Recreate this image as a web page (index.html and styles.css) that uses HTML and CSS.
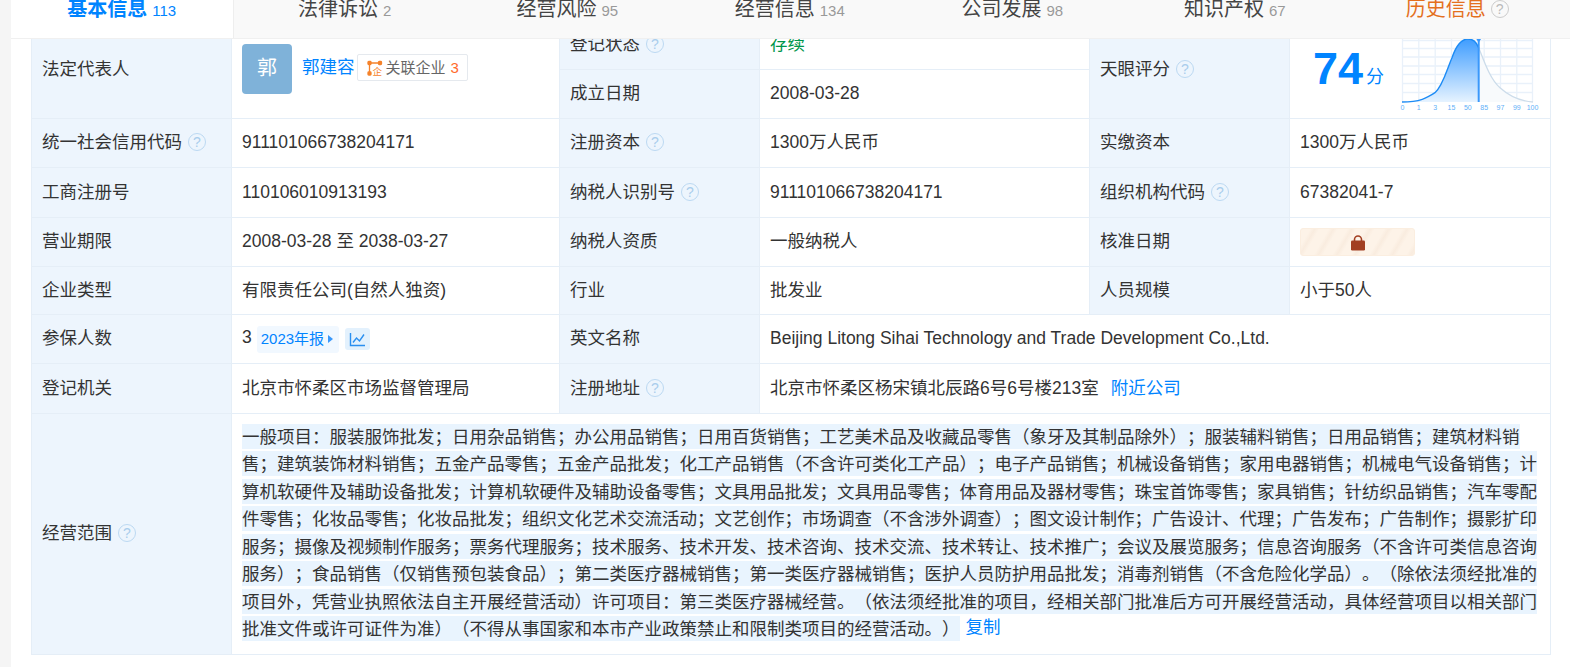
FILE: index.html
```html
<!DOCTYPE html>
<html lang="zh-CN">
<head>
<meta charset="utf-8">
<title>工商信息</title>
<link rel="stylesheet" href="styles.css">
</head>
<body>
<div class="page">
  <main class="card">
    <nav class="tabs">
      <a class="tab tab-active">基本信息<span class="count">113</span></a>
      <a class="tab">法律诉讼<span class="count">2</span></a>
      <a class="tab">经营风险<span class="count">95</span></a>
      <a class="tab">经营信息<span class="count">134</span></a>
      <a class="tab">公司发展<span class="count">98</span></a>
      <a class="tab">知识产权<span class="count">67</span></a>
      <a class="tab tab-history">历史信息<span class="q q-gray">?</span></a>
    </nav>
    <table class="info">
      <colgroup>
        <col class="c-label"><col class="c-val1"><col class="c-label"><col class="c-val2"><col class="c-label"><col class="c-val3">
      </colgroup>
      <tbody>
        <tr>
          <th rowspan="2">法定代表人</th>
          <td rowspan="2">
            <div class="person">
              <span class="avatar">郭</span>
              <div class="person-line">
                <a class="link">郭建容</a>
                <span class="rel-tag">
                  <svg class="rel-icon" width="16" height="16" viewBox="0 0 16 16" fill="none" stroke="#f5822a" stroke-width="1.3">
                    <rect x="1" y="1.5" width="3" height="3" rx=".8" fill="#f5822a"/>
                    <rect x="11.5" y="1.5" width="3" height="3" rx=".8" fill="#f5822a"/>
                    <rect x="1" y="12" width="3" height="3" rx=".8" fill="#f5822a"/>
                    <path d="M4 3h7.500M2.500 4.500v7.500"/>
                    <text x="5.500" y="15" font-size="9.500" fill="#f5822a" stroke="none" class="rel-qi">企</text>
                  </svg>关联企业<span class="rel-num">3</span>
                </span>
              </div>
            </div>
          </td>
          <th>登记状态<span class="q">?</span></th>
          <td class="green">存续</td>
          <th rowspan="2">天眼评分<span class="q">?</span></th>
          <td rowspan="2" class="score-cell">
            <div class="score">
              <span class="score-num">74</span><span class="score-unit">分</span>
              <svg class="score-chart" width="145" height="97" viewBox="0 0 145 97">
                <defs>
                  <linearGradient id="fillBlue" x1="0" y1="0" x2="0" y2="1">
                    <stop offset="0" stop-color="#3f9dff"/>
                    <stop offset="1" stop-color="#e6f3ff"/>
                  </linearGradient>
                </defs>
                <g stroke="#e9f1fa" stroke-width="1.300" fill="none">
                  <path d="M7 19.500H138M7 27.500H138M7 36H138M7 45H138M7 53.500H138M7 62.500H138M7 71.500H138"/>
                  <path d="M7.500 18V81M23.800 18V81M40.200 18V81M56.500 18V81M72.800 18V81M89.200 18V81M105.500 18V81M121.800 18V81M137.500 18V81"/>
                </g>
                <path d="M83.700 26.700C89 40 95 58 105 66.700C113 74 125 80 138 81V81H83.700Z" fill="#f8fafc"/>
                <path d="M83.700 26.700C89 40 95 58 105 66.700C113 74 125 80 138 81" fill="none" stroke="#ccdcea" stroke-width="1.300"/>
                <path d="M7 81C25 81 32 77 40 71.700C48 65 52 48 57 36.700C60 28 65 18 73 18C78 18 81.500 21 83.700 26.700V81Z" fill="url(#fillBlue)"/>
                <path d="M7 81C25 81 32 77 40 71.700C48 65 52 48 57 36.700C60 28 65 18 73 18C78 18 81.500 21 83.700 26.700" fill="none" stroke="#1c8bf5" stroke-width="1.400"/>
                <path d="M83.700 18V81" stroke="#3a98fb" stroke-width="2"/>
                <path d="M81 17.500h5.400l-2.700 4z" fill="#3a98fb"/>
                <g class="chart-labels" font-size="7" fill="#5fb0f8" text-anchor="middle">
                  <text x="7.500" y="89">0</text><text x="23.800" y="89">1</text><text x="40.200" y="89">3</text>
                  <text x="56.500" y="89">15</text><text x="72.800" y="89">50</text><text x="89.200" y="89">85</text>
                  <text x="105.500" y="89">97</text><text x="121.800" y="89">99</text><text x="137.500" y="89">100</text>
                </g>
              </svg>
            </div>
          </td>
        </tr>
        <tr>
          <th>成立日期</th>
          <td>2008-03-28</td>
        </tr>
        <tr>
          <th>统一社会信用代码<span class="q">?</span></th>
          <td>911101066738204171</td>
          <th>注册资本<span class="q">?</span></th>
          <td>1300万人民币</td>
          <th>实缴资本</th>
          <td>1300万人民币</td>
        </tr>
        <tr class="row-tall">
          <th>工商注册号</th>
          <td>110106010913193</td>
          <th>纳税人识别号<span class="q">?</span></th>
          <td>911101066738204171</td>
          <th>组织机构代码<span class="q">?</span></th>
          <td>67382041-7</td>
        </tr>
        <tr>
          <th>营业期限</th>
          <td>2008-03-28 至 2038-03-27</td>
          <th>纳税人资质</th>
          <td>一般纳税人</td>
          <th>核准日期</th>
          <td>
            <span class="locked">
              <svg width="16" height="17" viewBox="0 0 16 17"><path d="M4.500 7V5.500a3.500 3.500 0 0 1 7 0V7" fill="none" stroke="#a23f22" stroke-width="1.600"/><rect x="1" y="6.500" width="14" height="10" rx="1.200" fill="#a23f22"/></svg>
            </span>
          </td>
        </tr>
        <tr class="row-short">
          <th>企业类型</th>
          <td>有限责任公司(自然人独资)</td>
          <th>行业</th>
          <td>批发业</td>
          <th>人员规模</th>
          <td>小于50人</td>
        </tr>
        <tr>
          <th>参保人数</th>
          <td>
            <div class="insured">
              <span class="insured-num">3</span>
              <span class="year-tag">2023年报<i class="tri"></i></span>
              <span class="trend">
                <svg width="17" height="15" viewBox="0 0 17 15" fill="none" stroke="#2a8ff0" stroke-width="1.400"><path d="M1.500 1v12.500H16"/><path d="M4 10.500L7.500 6l3 3L15 2.500"/></svg>
              </span>
            </div>
          </td>
          <th>英文名称</th>
          <td colspan="3">Beijing Litong Sihai Technology and Trade Development Co.,Ltd.</td>
        </tr>
        <tr class="row-tall">
          <th>登记机关</th>
          <td>北京市怀柔区市场监督管理局</td>
          <th>注册地址<span class="q">?</span></th>
          <td colspan="3">北京市怀柔区杨宋镇北辰路6号6号楼213室<a class="link nearby">附近公司</a></td>
        </tr>
        <tr>
          <th>经营范围<span class="q">?</span></th>
          <td colspan="5" class="scope"><span class="selected">一般项目：服装服饰批发；日用杂品销售；办公用品销售；日用百货销售；工艺美术品及收藏品零售（象牙及其制品除外）；服装辅料销售；日用品销售；建筑材料销售；建筑装饰材料销售；五金产品零售；五金产品批发；化工产品销售（不含许可类化工产品）；电子产品销售；机械设备销售；家用电器销售；机械电气设备销售；计算机软硬件及辅助设备批发；计算机软硬件及辅助设备零售；文具用品批发；文具用品零售；体育用品及器材零售；珠宝首饰零售；家具销售；针纺织品销售；汽车零配件零售；化妆品零售；化妆品批发；组织文化艺术交流活动；文艺创作；市场调查（不含涉外调查）；图文设计制作；广告设计、代理；广告发布；广告制作；摄影扩印服务；摄像及视频制作服务；票务代理服务；技术服务、技术开发、技术咨询、技术交流、技术转让、技术推广；会议及展览服务；信息咨询服务（不含许可类信息咨询服务）；食品销售（仅销售预包装食品）；第二类医疗器械销售；第一类医疗器械销售；医护人员防护用品批发；消毒剂销售（不含危险化学品）。（除依法须经批准的项目外，凭营业执照依法自主开展经营活动）许可项目：第三类医疗器械经营。（依法须经批准的项目，经相关部门批准后方可开展经营活动，具体经营项目以相关部门批准文件或许可证件为准）（不得从事国家和本市产业政策禁止和限制类项目的经营活动。）</span><a class="link copy">复制</a></td>
        </tr>
      </tbody>
    </table>
  </main>
</div>
</body>
</html>
```

FILE: styles.css
```css
* { box-sizing: border-box; }
html, body { margin: 0; height: 667px; overflow: hidden; }
body {
  font-family: "Liberation Sans", "Noto Sans CJK SC", sans-serif;
  font-size: 17.5px;
  color: #333;
  background: #f5f5f5;
  text-spacing-trim: space-all;
}
.page { padding-left: 11px; height: 667px; }
.card { background: #fff; height: 667px; overflow: hidden; }

.tabs {
  position: relative;
  z-index: 2;
  display: flex;
  height: 38px;
  background: #f9f9f9;
  box-shadow: 0 1px 0 #f0f0f0;
}
.tab {
  flex: none;
  width: 222.500px;
  display: flex;
  justify-content: center;
  align-items: baseline;
  line-height: 18px;
  font-size: 20px;
  color: #444;
}
.tab-active {
  background: #fff;
  color: #0084ff;
  font-weight: 700;
  border-right: 1px solid #eee;
}
.tab-history { color: #e4701e; }
.count { margin-left: 5px; font-size: 15px; font-weight: 400; color: #999; }
.tab-active .count { color: #0084ff; }

.info {
  position: relative;
  z-index: 1;
  margin: -18px 0 0 20px;
  width: 1519px;
  table-layout: fixed;
  border-collapse: collapse;
}
.c-label { width: 200px; }
.c-val1 { width: 328px; }
.c-val2 { width: 330px; }
.c-val3 { width: 261px; }
.info tr { height: 49px; }
.info .row-tall { height: 50px; }
.info .row-short { height: 48px; }
.info th, .info td {
  border: 1px solid #e5eef7;
  padding: 0 10px;
  font-weight: 400;
  text-align: left;
  line-height: 27.500px;
}
.info th { background: #edf5fd; }
.green { color: #00964a; }
.link { color: #0084ff; }

.q {
  display: inline-flex;
  justify-content: center;
  align-items: center;
  width: 18px;
  height: 18px;
  margin-left: 6px;
  border: 1.500px solid #bcd9f2;
  border-radius: 50%;
  font-size: 14px;
  line-height: 1;
  font-weight: 400;
  color: #a9cdec;
  vertical-align: 1px;
}
.q-gray { border-color: #ccc; color: #bbb; margin-left: 5px; align-self: flex-start; }

.person { display: flex; align-items: flex-start; gap: 10px; margin-top: -1px; }
.avatar {
  display: flex;
  justify-content: center;
  align-items: center;
  width: 50px;
  height: 50px;
  border-radius: 4px;
  background: #7fb2d9;
  color: #fff;
  font-size: 20px;
}
.person-line { display: flex; align-items: center; margin-top: 10px; gap: 2px; }
.rel-tag {
  display: inline-flex;
  align-items: center;
  height: 27px;
  padding: 0 8px 0 9px;
  border: 1px solid #e5e9ee;
  border-radius: 2px;
  font-size: 15px;
  color: #666;
  white-space: nowrap;
}
.rel-icon { margin-right: 3px; }
.rel-num { margin-left: 5px; color: #ff6a2b; }

.score-cell.score-cell { padding: 0; }
.score { display: flex; align-items: flex-start; height: 97px; padding-left: 23px; }
.score-num {
  margin-top: 18px;
  font-size: 45px;
  line-height: 60px;
  font-weight: 700;
  color: #0084ff;
}
.score-unit { margin: 44px 0 0 3px; font-size: 18px; line-height: 24px; color: #0084ff; }
.score-chart { margin-left: 11px; flex: none; }

.locked {
  display: flex;
  justify-content: center;
  align-items: center;
  width: 115px;
  height: 28px;
  border: 1px solid #fbeee0;
  border-radius: 3px;
  background: repeating-linear-gradient(120deg, #fdf3e8 0 8px, #f9ecdf 12px, #fdf3e8 16px);
}

.insured { display: flex; align-items: center; }
.insured-num { margin-top: -2px; }
.year-tag {
  display: inline-flex;
  align-items: center;
  height: 27px;
  margin-left: 5px;
  padding: 0 6px 0 4px;
  border-radius: 3px;
  background: #f1f8ff;
  color: #0084ff;
  font-size: 15px;
  white-space: nowrap;
}
.tri {
  width: 0;
  height: 0;
  margin-left: 4px;
  border-left: 5px solid #3a98fb;
  border-top: 4.500px solid transparent;
  border-bottom: 4.500px solid transparent;
}
.trend {
  display: inline-flex;
  justify-content: center;
  align-items: center;
  width: 25px;
  height: 22px;
  margin-left: 6px;
  border-radius: 3px;
  background: #e3f1fd;
}
.nearby { margin-left: 12px; }

.info .scope { padding: 9px 10px 11px; }
.selected {
  padding: 2.500px 0;
  background: #e9f4fe;
}
.copy { margin-left: 6px; position: relative; top: -2px; }
```
